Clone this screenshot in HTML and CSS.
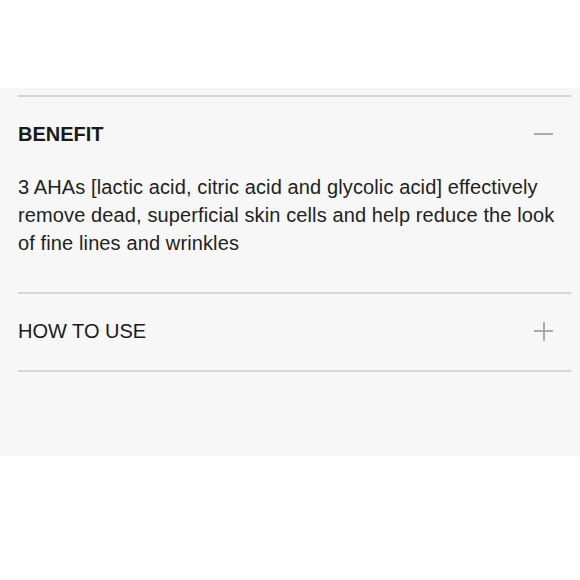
FILE: index.html
```html
<!DOCTYPE html>
<html>
<head>
<meta charset="utf-8">
<link rel="stylesheet" href="styles.css">
</head>
<body>
<div class="panel">
  <section class="item">
    <div class="head">
      <span class="title bold">BENEFIT</span>
      <span class="icon minus"></span>
    </div>
    <p class="body">3 AHAs [lactic acid, citric acid and glycolic acid] effectively remove dead, superficial skin cells and help reduce the look of fine lines and wrinkles</p>
  </section>
  <section class="item last">
    <div class="head">
      <span class="title">HOW TO USE</span>
      <span class="icon plus"></span>
    </div>
  </section>
</div>
</body>
</html>
```
FILE: styles.css
```css
html, body {
  margin: 0;
  padding: 0;
  background: #ffffff;
}
body {
  font-family: "Liberation Sans", Arial, sans-serif;
  color: #1e1e1e;
}
.panel {
  margin-top: 88px;
  height: 368px;
  background: #f7f7f7;
  padding: 7px 9px 0 18px;
  box-sizing: border-box;
}
.item {
  border-top: 2px solid #d6d6d6;
}
.item.last {
  border-bottom: 2px solid #d6d6d6;
}
.head {
  display: flex;
  align-items: center;
  justify-content: space-between;
  padding: 25px 18px 27px 0;
  height: 24px;
  box-sizing: content-box;
}
.title {
  font-size: 20px;
  line-height: 24px;
  color: #1a1a1a;
}
.title.bold {
  font-weight: bold;
}
.body {
  margin: 0;
  padding: 0 6px 35px 0;
  font-size: 20px;
  letter-spacing: 0.12px;
  line-height: 28px;
  color: #222;
}
.icon {
  position: relative;
  width: 19px;
  height: 19px;
  display: block;
}
.icon::before,
.icon::after {
  content: "";
  position: absolute;
  background: #ababab;
}
.icon::before {
  left: 0;
  right: 0;
  top: 8.5px;
  height: 2px;
}
.plus::after {
  top: 0;
  bottom: 0;
  left: 8.5px;
  width: 2px;
}
```
